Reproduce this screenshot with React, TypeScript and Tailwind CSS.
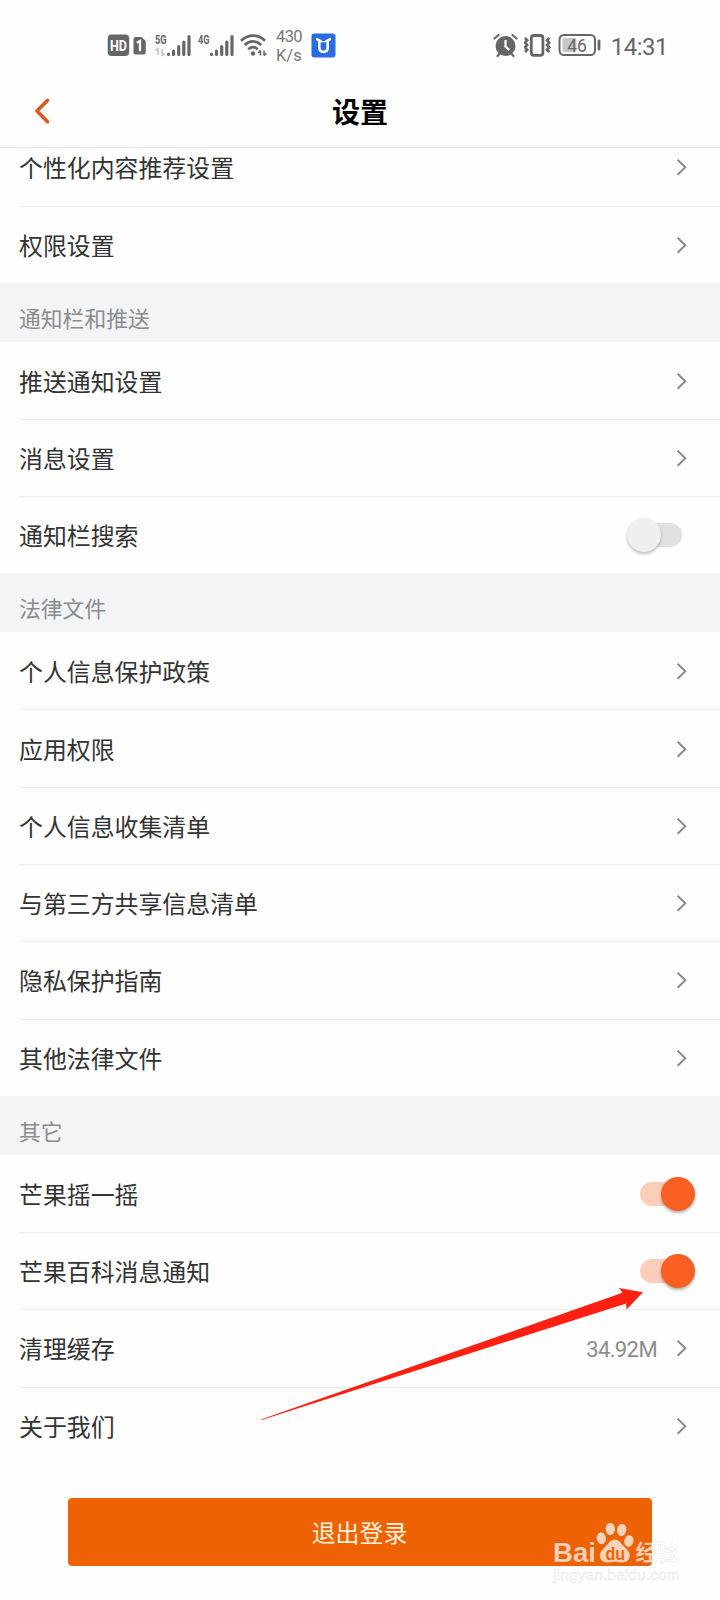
import type { ReactNode } from 'react';

interface Row {
  label: string;
  value?: string;
  toggle?: 'on' | 'off';
}

interface Section {
  title?: string;
  rows: Row[];
}

const sections: Section[] = [
  { rows: [{ label: '个性化内容推荐设置' }, { label: '权限设置' }] },
  {
    title: '通知栏和推送',
    rows: [{ label: '推送通知设置' }, { label: '消息设置' }, { label: '通知栏搜索', toggle: 'off' }],
  },
  {
    title: '法律文件',
    rows: [
      { label: '个人信息保护政策' },
      { label: '应用权限' },
      { label: '个人信息收集清单' },
      { label: '与第三方共享信息清单' },
      { label: '隐私保护指南' },
      { label: '其他法律文件' },
    ],
  },
  {
    title: '其它',
    rows: [
      { label: '芒果摇一摇', toggle: 'on' },
      { label: '芒果百科消息通知', toggle: 'on' },
      { label: '清理缓存', value: '34.92M' },
      { label: '关于我们' },
    ],
  },
];

function Signal({ label, arrows }: { label: string; arrows?: boolean }) {
  return (
    <svg width="36" height="26" viewBox="0 0 36 26" fill="#666">
      <text x="0" y="11.500" fontSize="13" fontWeight="700" textLength="11.500" lengthAdjust="spacingAndGlyphs" fontFamily="Roboto, sans-serif">
        {label}
      </text>
      {arrows && (
        <path d="M3 16v7M0.8 18.4 3 16M7 17v7M7 24l2.4-2.6" fill="none" stroke="#c4c4c4" strokeWidth="1.6" />
      )}
      <g stroke="#666" strokeWidth="3.200" strokeLinecap="round">
        <path d="M13.500 22.200v.2M18.500 19v3.4M23.700 14.500v7.900M28.800 10v12.400M34 4.500v17.900" />
      </g>
    </svg>
  );
}

function StatusBar() {
  return (
    <div className="flex h-[90px] shrink-0 items-center justify-between pl-[107px] pr-[52px] text-[#666]">
      <div className="flex items-center">
        <svg width="40" height="24" viewBox="0 0 40 24" fill="#666">
          <rect x="0.7" y="1.500" width="21.5" height="21.5" rx="4" />
          <text x="3" y="17.500" fontSize="14.500" fontWeight="700" textLength="17" lengthAdjust="spacingAndGlyphs" fill="#fff" fontFamily="Roboto, sans-serif">
            HD
          </text>
          <path d="M28.500 4h6l4.200 4v11.500a2 2 0 0 1-2 2h-8.200a2 2 0 0 1-2-2V6a2 2 0 0 1 2-2z" />
          <path d="M29.800 9.800 33 8v10.300" fill="none" stroke="#fff" strokeWidth="2.300" />
        </svg>
        <div className="ml-2 flex gap-[7px]">
          <Signal label="5G" arrows />
          <Signal label="4G" />
        </div>
        <svg className="ml-[6px]" width="28" height="26" viewBox="0 0 28 26" fill="none" stroke="#666" strokeWidth="2.700">
          <path d="M1 8.700C8 1.800 18 1.800 25 8.700" />
          <path d="M4.700 13c5-4.800 11.600-4.800 16.600 0" />
          <path d="M8.300 17.300c3-2.600 6.600-2.600 9.400 0" />
          <circle cx="13" cy="21.500" r="2.200" fill="#666" stroke="none" />
          <path d="M20.500 18.500v5M20.500 18.300l-2.200 2.700M24 18.500v5M24 23.700l2.300-2.700" strokeWidth="1.500" />
        </svg>
        <div className="ml-[8px] w-[27px] pt-[2px] font-[Roboto,sans-serif] text-[16.5px]/[19px] text-[#777]">
          <div className="-tracking-[0.6px]">430</div>
          <div>K/s</div>
        </div>
        <svg className="ml-[8px]" width="25" height="25" viewBox="0 0 25 25" fill="none">
          <rect x="0.5" y="0.5" width="24" height="24" rx="3" fill="#2a6be0" />
          <path d="M5 6c2 0 2.800 2 4.800 2h5.400c2 0 2.800-2 4.800-2" stroke="#fff" strokeWidth="2.300" />
          <path d="M8.300 8v6.500c0 2.800 1.700 4.400 4.200 4.400s4.200-1.600 4.200-4.400V8" stroke="#fff" strokeWidth="2.600" />
          <path d="M10.500 5.500h4v2.500h-4z" fill="#2a6be0" />
        </svg>
      </div>
      <div className="flex items-center">
        <svg width="26" height="26" viewBox="0 0 26 26" fill="none" stroke="#666">
          <circle cx="12.500" cy="14" r="10" fill="#666" stroke="none" />
          <path d="M12.500 8v6.500l3.800 3.300" stroke="#fff" strokeWidth="2.200" />
          <path d="M1.500 6.500 5.500 3M23.500 6.500 19.500 3M4.500 24l2.200-2.500M20.500 24l-2.200-2.500" strokeWidth="2.200" strokeLinecap="round" />
        </svg>
        <svg className="ml-[5px]" width="28" height="26" viewBox="0 0 28 26" fill="none" stroke="#666">
          <rect x="7.300" y="3.500" width="11.600" height="19.800" rx="2.500" strokeWidth="2.800" />
          <path d="M1 6l2.200 2.300L1 10.700 3.200 13 1 15.400l2.200 2.300L1 20M25.200 6 23 8.300l2.200 2.400L23 13l2.200 2.400-2.200 2.300L25.200 20" strokeWidth="2.600" />
        </svg>
        <svg className="ml-[6px]" width="44" height="26" viewBox="0 0 44 26">
          <rect x="1.500" y="3" width="35.500" height="20" rx="4.500" fill="none" stroke="#666" strokeWidth="2" />
          <rect x="4.500" y="6" width="14" height="14" rx="2" fill="#c6c6c6" />
          <text x="9.200" y="19.800" fontSize="19" textLength="19.500" lengthAdjust="spacingAndGlyphs" fill="#666" fontFamily="Roboto, sans-serif">
            46
          </text>
          <path d="M41 9v8" stroke="#666" strokeWidth="2.800" strokeLinecap="round" />
        </svg>
        <div className="ml-[9px] pt-[3px] font-[Roboto,sans-serif] text-[24px]/[28px] -tracking-[0.5px]">14:31</div>
      </div>
    </div>
  );
}

function Toggle({ on }: { on: boolean }) {
  if (on) {
    return (
      <span className="mr-[25px] flex h-[24px] w-[55px] items-center justify-end rounded-full bg-[#fccdb9]">
        <span className="size-[34px] shrink-0 rounded-full bg-[#f96022] shadow-[0_2px_3px_rgba(0,0,0,0.3)]" />
      </span>
    );
  }
  return (
    <span className="mr-[38px] flex h-[24px] w-[55px] items-center rounded-full bg-[#e1e1e1]">
      <span className="size-[34px] shrink-0 rounded-full bg-[#efefef] shadow-[0_2px_3px_rgba(0,0,0,0.25)]" />
    </span>
  );
}

function Chevron() {
  return (
    <svg className="mr-[33px]" width="11" height="18" viewBox="0 0 11 18" fill="none" stroke="#888" strokeWidth="1.900">
      <path d="M1.600 1.700 9.300 9.200l-7.700 7.500" />
    </svg>
  );
}

function ListRow({ row, first }: { row: Row; first: boolean }) {
  let action: ReactNode = <Chevron />;
  if (row.toggle) action = <Toggle on={row.toggle === 'on'} />;

  return (
    <div className={`ml-[19px] flex h-[77.3px] items-center border-t ${first ? 'border-transparent' : 'border-[#ebebeb]'}`}>
      <span className="flex-1 text-[23.9px]/[36px] text-[#333]">{row.label}</span>
      {row.value && (
        <span className="mr-[19px] pt-[3px] font-[Roboto,sans-serif] text-[22px] -tracking-[0.6px] text-[#8c8c8c]">{row.value}</span>
      )}
      {action}
    </div>
  );
}

function Watermark() {
  return (
    <svg className="absolute right-[36px] bottom-[12px]" width="136" height="76" viewBox="0 0 136 76">
      <g fill="#fff" fillOpacity="0.72" stroke="#000" strokeOpacity="0.08" strokeWidth="0.8">
        <text x="5" y="50" fontSize="28" fontWeight="700" textLength="43" lengthAdjust="spacingAndGlyphs" fontFamily="'Liberation Sans', sans-serif">
          Bai
        </text>
        <ellipse cx="53.300" cy="26.300" rx="4.700" ry="6" transform="rotate(-10 53.300 26.300)" />
        <ellipse cx="62.300" cy="17" rx="4.700" ry="6.200" />
        <ellipse cx="73.700" cy="18" rx="4.700" ry="6.200" transform="rotate(10 73.700 18)" />
        <ellipse cx="80.800" cy="29" rx="4.700" ry="6" transform="rotate(12 80.800 29)" />
        <path d="M66.800 27.500c4.700 0 6.500 4.300 9.500 7.300s5.500 5 5.500 9c0 4.500-3.500 6.700-7 6.700-3 0-5-.8-8-.8s-5 .8-8 .8c-3.500 0-7-2.200-7-6.700 0-4 2.500-6 5.500-9s4.800-7.300 9.500-7.300z" />
        <text x="87.500" y="48" fontSize="22" fontWeight="700" textLength="43" fontFamily="'Noto Sans CJK SC', sans-serif">
          经验
        </text>
      </g>
      <text x="57.500" y="47.500" fontSize="18" fontWeight="700" textLength="19.500" lengthAdjust="spacingAndGlyphs" fill="#ef6203" fontFamily="'Liberation Sans', sans-serif">
        du
      </text>
      <text x="5" y="67.500" fontSize="15" textLength="127" lengthAdjust="spacingAndGlyphs" fill="#fff" stroke="#000" strokeOpacity="0.09" strokeWidth="0.8" fontFamily="'Liberation Sans', sans-serif">
        jingyan.baidu.com
      </text>
    </svg>
  );
}

export default function App() {
  return (
    <div className="relative flex h-[1600px] w-[720px] flex-col overflow-hidden bg-[#fefefe] font-['Noto_Sans_CJK_SC',sans-serif]">
      <StatusBar />
      <header className="grid h-[58px] shrink-0 grid-cols-[1fr_auto_1fr] items-center border-b border-[#e6e6e6]">
        <button className="ml-[34px] pb-[15px]" aria-label="返回">
          <svg width="18" height="26" viewBox="0 0 18 26" fill="none" stroke="#e0561f" strokeWidth="3.600" strokeLinecap="round" strokeLinejoin="round">
            <path d="M13.500 2.300 3 13l10.500 10.700" />
          </svg>
        </button>
        <h1 className="pb-[15px] text-[28px]/[40px] font-bold text-black">设置</h1>
      </header>

      <main className="flex h-[1315.8px] shrink-0 flex-col justify-end overflow-hidden">
        {sections.map((section, i) => (
          <section key={i}>
            {section.title && (
              <h2 className="flex h-[58.7px] items-end bg-[#f2f4f6] pl-[19px] pb-[7px] text-[21.8px]/[34px] text-[#8c8c8c]">
                {section.title}
              </h2>
            )}
            {section.rows.map((row, j) => (
              <ListRow key={row.label} row={row} first={j === 0} />
            ))}
          </section>
        ))}
      </main>

      <button className="mt-[34.2px] ml-[68px] h-[68px] w-[584px] shrink-0 rounded-[4px] bg-[#ef6203] pr-px pb-px text-[23.9px] text-[#fff3dc]">
        退出登录
      </button>

      <svg className="absolute top-[1284px] left-[260px]" width="386" height="138" viewBox="0 0 386 138" fill="#ff2012">
        <path d="M1.500 135.200 362.500 8.800 359 4l24 4.200L366.500 25.500l-.3-6L1.500 136z" />
      </svg>
      <Watermark />
    </div>
  );
}
